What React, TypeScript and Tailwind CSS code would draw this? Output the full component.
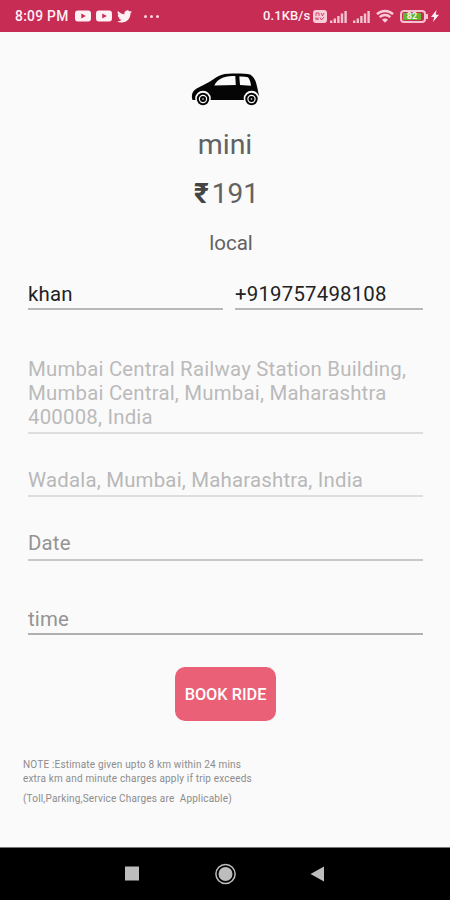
import clsx from "clsx";

type FieldProps = {
  value: string;
  className?: string;
};

const Field = ({ value, className }: FieldProps) => (
  <div
    className={clsx(
      "border-b-2 text-[20.4px] leading-6 tracking-[0.2px] whitespace-pre-line",
      className
    )}
  >
    {value}
  </div>
);

const YoutubeIcon = () => (
  <svg className="h-3 w-4" viewBox="0 0 16 12" fill="#fff0f4">
    <path
      fillRule="evenodd"
      d="M3 0.5h10a3 3 0 0 1 3 3v5a3 3 0 0 1-3 3H3a3 3 0 0 1-3-3v-5a3 3 0 0 1 3-3zM6.3 3.4v5.2L10.8 6z"
    />
  </svg>
);

const TwitterIcon = () => (
  <svg className="h-[15px] w-[15px]" viewBox="0 0 24 24" fill="#fff0f4">
    <path d="M23.95 4.57a10 10 0 0 1-2.82.77 4.96 4.96 0 0 0 2.16-2.72c-.95.55-2 .95-3.13 1.18a4.92 4.92 0 0 0-8.38 4.48C7.69 8.1 4.07 6.13 1.64 3.16a4.82 4.82 0 0 0-.67 2.48c0 1.71.87 3.21 2.19 4.1a4.9 4.9 0 0 1-2.23-.62v.06a4.92 4.92 0 0 0 3.95 4.83 5 5 0 0 1-2.21.08 4.94 4.94 0 0 0 4.6 3.42A9.87 9.87 0 0 1 0 19.54a13.99 13.99 0 0 0 7.56 2.21c9.05 0 14-7.5 14-13.98 0-.21 0-.42-.02-.63a9.94 9.94 0 0 0 2.41-2.57z" />
  </svg>
);

const SignalIcon = () => (
  <svg className="h-[13px] w-[17px]" viewBox="0 0 17 13" fill="#f5c3d0">
    <rect x="0" y="10.5" width="2.4" height="2.5" />
    <rect x="3.6" y="8.5" width="2.4" height="4.5" />
    <rect x="7.2" y="6" width="2.4" height="7" />
    <rect x="10.8" y="3.5" width="2.4" height="9.5" />
    <rect x="14.4" y="1" width="2.4" height="12" />
  </svg>
);

const WifiIcon = () => (
  <svg className="h-[14px] w-[18px]" viewBox="0 0 18 14" fill="none" stroke="#f9ccd8">
    <path d="M1 5.2a11.5 11.5 0 0 1 16 0" strokeWidth="2.4" />
    <path d="M3.7 8.2a7.6 7.6 0 0 1 10.6 0" strokeWidth="2.4" />
    <path d="M6 10.8a4 4 0 0 1 6 0L9 13.8z" fill="#f9ccd8" stroke="none" />
  </svg>
);

const CarIcon = () => (
  <svg className="h-[34px] w-[70px]" viewBox="0 0 70 34">
    <path
      d="M2.5 28C.8 23 2.5 19 6.7 16.500 11 14 16 12 20 9.500 25 6 28 3.800 32 2.700 38 1.300 54 1.200 60 2.600c3 1.500 4.800 4.500 6 8l1.500 6c.3 2.500 1 5 1.700 7.400L67 28z"
      fill="#050505"
    />
    <path d="M24.3 13.5c1.5-3.5 4.5-6.5 9-8 3.500-1.200 8-1.500 12-1.500l.5 9z" fill="#fafafa" />
    <path d="M49.3 4.500c3-.2 6 0 8.700.8 1.800 2.200 2.700 5 3 8.400L50 13z" fill="#fafafa" />
    {[13, 61.5].map((cx) => (
      <g key={cx}>
        <circle cx={cx} cy="26.5" r="7.8" fill="#fafafa" />
        <circle cx={cx} cy="27" r="6.2" fill="#050505" />
        <circle cx={cx} cy="27" r="3.6" fill="none" stroke="#fafafa" strokeWidth="1.2" />
        <circle cx={cx} cy="27" r="0.8" fill="#fafafa" />
      </g>
    ))}
  </svg>
);

const StatusBar = () => (
  <header className="flex h-8 shrink-0 items-center bg-[#c72c55] pr-[11px] pl-[15px] text-[#fff0f4]">
    <span className="w-[60px] text-[13.8px] font-medium tracking-[0.3px] whitespace-nowrap">8:09 PM</span>
    <div className="flex items-center gap-[5px]">
      <YoutubeIcon />
      <YoutubeIcon />
      <TwitterIcon />
    </div>
    <div className="ml-[12px] flex gap-[3px]">
      {[0, 1, 2].map((dot) => (
        <span key={dot} className="h-[3px] w-[3px] rounded-full bg-[#fbd5df]" />
      ))}
    </div>
    <div className="ml-auto flex items-center">
      <span className="w-[50px] text-[13px] font-medium tracking-[0.1px] whitespace-nowrap">0.1KB/s</span>
      <svg className="h-[13px] w-[14px]" viewBox="0 0 14 13">
        <rect width="14" height="13" rx="3" fill="#f9ccd8" />
        <path
          d="M3 6V3h3v3M8 3l1.5 3L11 3M3 10V7.5l2 2.5V7.5M7 7.5l1.5 2.5L11 7"
          fill="none"
          stroke="#c72c55"
          strokeWidth="0.8"
        />
      </svg>
      <div className="ml-[3px] flex gap-[6px]">
        <SignalIcon />
        <SignalIcon />
      </div>
      <div className="ml-[6px]">
        <WifiIcon />
      </div>
      <div className="ml-[6px] flex h-[13px] w-[26px] items-center rounded-[4px] border-2 border-[#f5c3d0] bg-[#c72c55] p-px">
        <div className="flex h-full w-[18px] items-center justify-center rounded-[1px] bg-[#62b52c] text-[9px] leading-none font-bold">
          82
        </div>
      </div>
      <div className="h-[5px] w-[2px] bg-[#f5c3d0]" />
      <svg className="ml-[3px] h-[12px] w-[8px]" viewBox="0 0 8 12" fill="#fff0f4">
        <path d="M5.5 0L0 7h3.2L2 12l6-7.2H4.7z" />
      </svg>
    </div>
  </header>
);

const NavBar = () => (
  <nav className="flex h-[53px] shrink-0 items-center justify-center border-t border-[#777] bg-black">
    <svg className="h-[22px] w-[204px]" viewBox="0 0 204 22" fill="#bdbdbd">
      <rect x="2" y="3.5" width="14" height="14" />
      <circle cx="102.5" cy="11" r="9.6" fill="none" stroke="#bdbdbd" strokeWidth="1.5" />
      <circle cx="102.5" cy="11" r="7" />
      <path d="M187.5 11L201 3.5v15z" />
    </svg>
  </nav>
);

const App = () => {
  return (
    <div className="flex h-[900px] w-[450px] flex-col bg-[#fafafa] font-['Roboto',sans-serif]">
      <StatusBar />
      <main className="flex flex-1 flex-col pt-[40px]">
        <div className="flex flex-col items-center text-[#626262]">
          <CarIcon />
          <h1 className="mt-[23px] text-[28.5px] leading-8">mini</h1>
          <div className="mt-[17px] ml-[3px] flex items-center gap-[3px] text-[28px] leading-8">
            <span className="font-bold text-[#444]">₹</span>
            <span>191</span>
          </div>
          <p className="mt-[21px] ml-3 text-[20.5px] leading-6">local</p>
        </div>

        <form className="flex flex-col px-7 pr-[27px]">
          <div className="mt-[27px] flex gap-3">
            <Field value="khan" className="w-[195px] border-[#b8b8b8] pb-0.5 text-[#222]" />
            <Field value="+919757498108" className="flex-1 border-[#b8b8b8] pb-0.5 text-[#222]" />
          </div>
          <Field
            value={"Mumbai Central Railway Station Building,\nMumbai Central, Mumbai, Maharashtra\n400008, India"}
            className="mt-[47px] border-[#dedede] pb-[3px] text-[#bababa]"
          />
          <Field
            value="Wadala, Mumbai, Maharashtra, India"
            className="mt-[34px] border-[#dedede] pb-[3px] text-[#b8b8b8]"
          />
          <Field value="Date" className="mt-[34px] border-[#c8c8c8] pb-1 text-[#949494]" />
          <Field value="time" className="mt-[46px] border-[#b0b0b0] pb-0.5 text-[#949494]" />
          <button
            type="button"
            className="mt-8 h-[54px] w-[101px] self-center rounded-[10px] bg-[#ea6077] pt-[3px] text-[16.3px] font-medium whitespace-nowrap text-white"
          >
            BOOK RIDE
          </button>
        </form>

        <div className="mt-[37px] pl-[23px] text-[10px] leading-[14px] tracking-[0.18px] text-[#8c8c8c]">
          <p>NOTE :Estimate given upto 8 km within 24 mins</p>
          <p>extra km and minute charges apply if trip exceeds</p>
          <p className="mt-[6px] whitespace-pre">(Toll,Parking,Service Charges are  Applicable)</p>
        </div>
      </main>
      <NavBar />
    </div>
  );
};

export default App;
